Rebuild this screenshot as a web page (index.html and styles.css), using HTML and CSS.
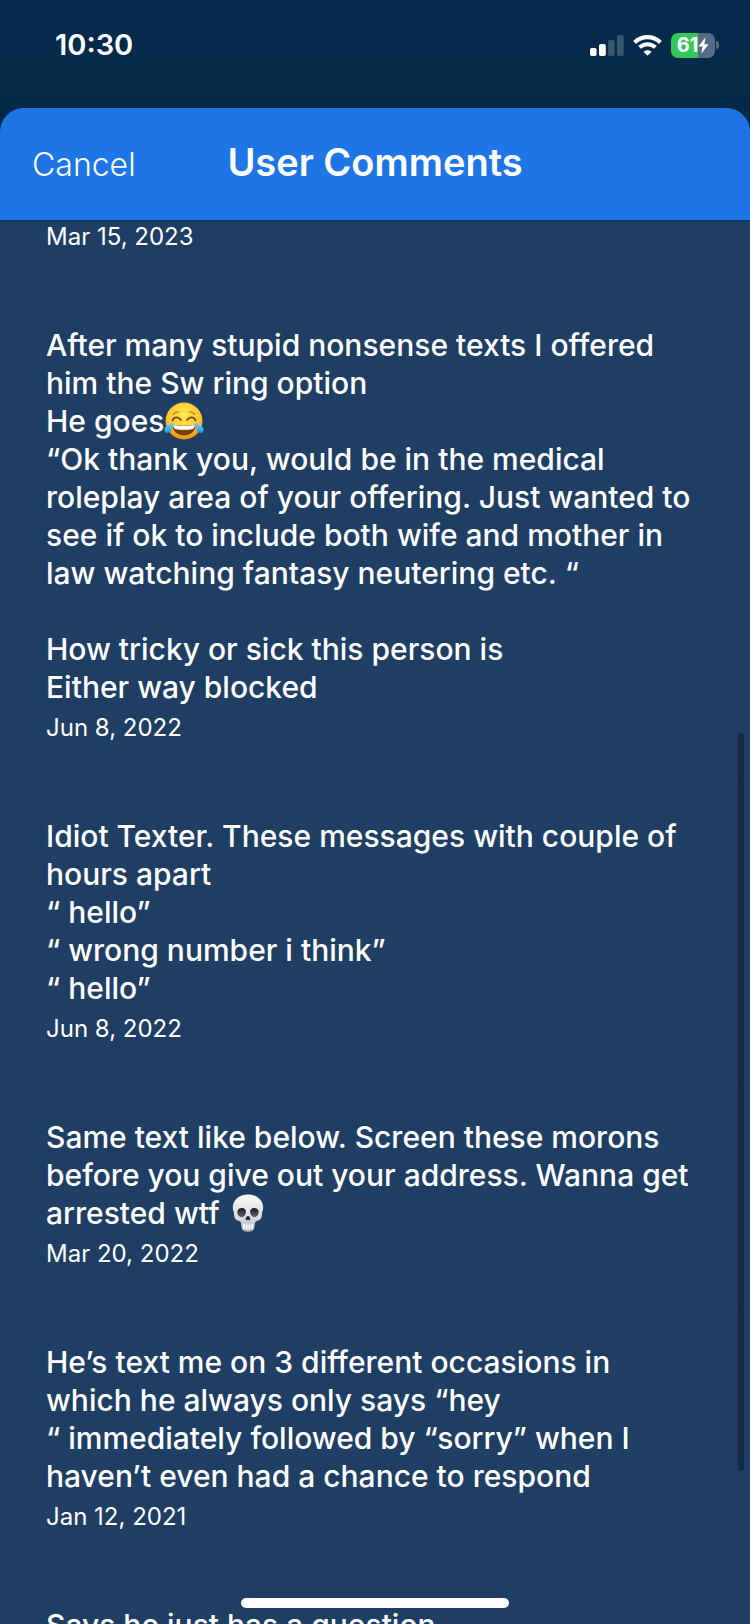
FILE: index.html
```html
<!doctype html>
<html lang="en">
    <head>
        <meta charset="UTF-8" />
        <meta name="viewport" content="width=device-width, initial-scale=1.0" />
        <title>User Comments</title>
        <link rel="stylesheet" href="styles.css">
    </head>
    <body>
        <div class="status-bar">
            <time class="clock">10:30</time>
            <div class="status-icons">
                <svg class="signal" width="34" height="21" viewBox="0 0 34 21" fill="#fff" aria-hidden="true">
                    <rect x="0" y="13" width="6.6" height="8" rx="1.8" />
                    <rect x="9" y="9" width="6.8" height="12" rx="1.8" />
                    <rect x="18" y="5" width="6.6" height="16" rx="1.8" opacity="0.2" />
                    <rect x="27" y="0" width="6.8" height="21" rx="1.8" opacity="0.2" />
                </svg>
                <svg class="wifi" width="29" height="21" viewBox="0 0 29 21" fill="none" stroke="#fff" aria-hidden="true">
                    <path d="M1.6 7.4C8.8 0.4 20.2 0.4 27.4 7.4" stroke-width="4.2" />
                    <path d="M6.6 12.4C11.1 8.1 17.9 8.1 22.4 12.4" stroke-width="4" />
                    <path d="M14.5 20.8L10.4 16.7C12.6 14.6 16.4 14.6 18.6 16.7Z" fill="#fff" stroke="none" />
                </svg>
                <div class="battery">
                    <div class="battery-body">
                        <span>61</span>
                        <svg width="11" height="17" viewBox="0 0 11 17" fill="#fff" aria-hidden="true">
                            <path d="M7.6 0.3L0.3 9.4H4.6L3.2 16.7L10.7 7.3H6.3Z" />
                        </svg>
                    </div>
                    <div class="battery-tip"></div>
                </div>
            </div>
        </div>

        <main class="sheet">
            <header class="sheet-header">
                <button type="button" class="cancel">Cancel</button>
                <h1>User Comments</h1>
            </header>

            <div class="comments">
                <article class="comment">
                    <time>Mar 15, 2023</time>
                </article>

                <article class="comment">
                    <p>
                        After many stupid nonsense texts I offered him the Sw
                        ring option<br />
                        He goes<svg class="emoji" viewBox="0 0 40 38" role="img" aria-label="face with tears of joy">
                            <defs>
                                <radialGradient id="face" cx="0.5" cy="0.35" r="0.68">
                                    <stop offset="0" stop-color="#ffe94f" />
                                    <stop offset="0.65" stop-color="#fdc62f" />
                                    <stop offset="1" stop-color="#e8850f" />
                                </radialGradient>
                                <linearGradient id="tear" x1="0" y1="0" x2="0" y2="1">
                                    <stop offset="0" stop-color="#8bdcff" />
                                    <stop offset="1" stop-color="#1995e8" />
                                </linearGradient>
                            </defs>
                            <circle cx="20" cy="19" r="18.5" fill="url(#face)" />
                            <path d="M8.5 22.5C16 24.3 24 24.3 31.5 22.5C31.5 29.5 26.5 33.5 20 33.5S8.5 29.5 8.5 22.5Z" fill="#7b3f0c" />
                            <path d="M9.2 22.8C16 24.4 24 24.4 30.8 22.8C30.6 26 29.6 27 28 27.2C23 28 17 28 12 27.2C10.4 27 9.4 26 9.2 22.8Z" fill="#fff" />
                            <path d="M8.5 18.2C10.5 14.4 14.3 14.6 17 18M23 18C25.7 14.6 29.5 14.4 31.5 18.2" fill="none" stroke="#7a450e" stroke-width="1.9" stroke-linecap="round" />
                            <path d="M9.5 12C11 10.6 12.5 9.9 14.8 9.8M30.5 12C29 10.6 27.5 9.9 25.2 9.8" fill="none" stroke="#b8741a" stroke-width="1.3" stroke-linecap="round" />
                            <path d="M8.6 19.2C9.3 25 7.4 31 3.4 31C0.4 31 -0.6 27.6 1.4 25.2C3.2 23.2 6.6 22 8.6 19.2Z" fill="url(#tear)" />
                            <path d="M31.4 19.2C30.7 25 32.6 31 36.6 31C39.6 31 40.6 27.6 38.6 25.2C36.8 23.2 33.4 22 31.4 19.2Z" fill="url(#tear)" />
                        </svg><br />
                        “Ok thank you, would be in the medical roleplay area of
                        your offering. Just wanted to see if ok to include both
                        wife and mother in law watching fantasy neutering etc.
                        “<br />
                        <br />
                        How tricky or sick this person is<br />
                        Either way blocked
                    </p>
                    <time>Jun 8, 2022</time>
                </article>

                <article class="comment">
                    <p>
                        Idiot Texter. These messages with couple of hours
                        apart<br />
                        “ hello”<br />
                        “ wrong number i think”<br />
                        “ hello”
                    </p>
                    <time>Jun 8, 2022</time>
                </article>

                <article class="comment">
                    <p>
                        Same text like below. Screen these morons before you
                        give out your address. Wanna get arrested wtf
                        <svg class="emoji" viewBox="0 0 40 40" role="img" aria-label="skull">
                            <defs>
                                <linearGradient id="bone" x1="0" y1="0" x2="0" y2="1">
                                    <stop offset="0" stop-color="#fbfbfc" />
                                    <stop offset="0.6" stop-color="#dcdde2" />
                                    <stop offset="1" stop-color="#b4b5ba" />
                                </linearGradient>
                                <linearGradient id="socket" x1="0" y1="0" x2="0" y2="1">
                                    <stop offset="0" stop-color="#17171b" />
                                    <stop offset="1" stop-color="#65656b" />
                                </linearGradient>
                            </defs>
                            <path d="M20 0.5C29.5 0.5 36 6.2 36 14.5C36 17.4 34.7 18.8 34.7 21.3C34.7 25 33.6 27.2 30.2 28.2C27.4 29 27.3 30 27 33.5C26.7 38 25 39.7 20 39.7S13.3 38 13 33.5C12.7 30 12.6 29 9.8 28.2C6.4 27.2 5.3 25 5.3 21.3C5.3 18.8 4 17.4 4 14.5C4 6.2 10.5 0.5 20 0.5Z" fill="url(#bone)" />
                            <path d="M9.3 17.2C10.8 14.4 15.5 14 17.3 16.6C18.7 19 17.2 23.6 14 24.3C10.4 25 7.6 21 9.3 17.2Z" fill="url(#socket)" />
                            <path d="M30.7 17.2C29.2 14.4 24.5 14 22.7 16.6C21.3 19 22.8 23.6 26 24.3C29.6 25 32.4 21 30.7 17.2Z" fill="url(#socket)" />
                            <path d="M20 23.2C21.6 23.2 22.8 26 22.2 27.2C21.6 28 20.7 27 20 27S18.4 28 17.8 27.2C17.2 26 18.4 23.2 20 23.2Z" fill="#29292e" />
                            <path d="M14.5 31.5C18 32.6 22 32.6 25.5 31.5L25 36.6C22 37.6 18 37.6 15 36.6Z" fill="#fff" />
                            <path d="M17.3 32V37.2M20 32.3V37.4M22.7 32V37.2" stroke="#a9aaaf" stroke-width="0.7" />
                        </svg>
                    </p>
                    <time>Mar 20, 2022</time>
                </article>

                <article class="comment">
                    <p>
                        He’s text me on 3 different occasions in which he always
                        only says “hey<br />
                        “ immediately followed by “sorry” when I haven’t even
                        had a chance to respond
                    </p>
                    <time>Jan 12, 2021</time>
                </article>

                <article class="comment">
                    <p>Says he just has a question</p>
                </article>
            </div>
        </main>

        <div class="scroll-thumb"></div>
        <div class="home-indicator"></div>
    </body>
</html>
```

FILE: styles.css
```css
* {
    margin: 0;
    padding: 0;
    box-sizing: border-box;
}

body {
    font-family: Inter, "Liberation Sans", sans-serif;
    color: #fff;
    background: linear-gradient(#072a50 0, #062a45 108px);
    height: 100vh;
    display: flex;
    flex-direction: column;
    overflow: hidden;
}

/* Status bar */
.status-bar {
    height: 108px;
    padding: 26px 31px 0 55px;
    display: flex;
    justify-content: space-between;
    align-items: flex-start;
}

.clock {
    font-size: 29px;
    line-height: 38px;
    font-weight: 600;
}

.status-icons {
    height: 38px;
    display: flex;
    align-items: center;
    gap: 9px;
}

.battery {
    display: flex;
    align-items: center;
    gap: 1px;
}

.battery-body {
    width: 44px;
    height: 25px;
    border-radius: 7px;
    background: linear-gradient(90deg, #34c759 61%, #566c84 61%);
    display: flex;
    align-items: center;
    justify-content: center;
    font-size: 20px;
    line-height: 25px;
    font-weight: 700;
}

.battery-tip {
    width: 3px;
    height: 8px;
    border-radius: 0 3px 3px 0;
    background: #566c84;
}

/* Sheet */
.sheet {
    flex: 1;
    min-height: 0;
    display: flex;
    flex-direction: column;
    background: #1f3e63;
    border-radius: 24px 24px 0 0;
    overflow: hidden;
}

.sheet-header {
    flex-shrink: 0;
    display: grid;
    grid-template-columns: 1fr auto 1fr;
    align-items: baseline;
    padding: 30px 32px 31px;
    background: #1d75e6;
    border-bottom: 1px solid #1a3152;
}

.sheet-header h1 {
    font-size: 38px;
    line-height: 48px;
    font-weight: 600;
}

.cancel {
    justify-self: start;
    font-family: inherit;
    font-size: 32px;
    line-height: 48px;
    font-weight: 350;
    color: #fff;
    background: none;
    border: none;
    cursor: pointer;
}

/* Comments */
.comments {
    padding-left: 46px;
}

.comment {
    padding: 36px 46px 36px 0;
    border-bottom: 1px solid #293d5a;
}

.comment:first-child {
    padding-top: 0;
}

.comment p {
    font-size: 30px;
    line-height: 38px;
    font-weight: 550;
    margin-bottom: 6px;
}

.comment time {
    display: block;
    font-size: 24px;
    line-height: 32px;
    font-weight: 400;
}

.emoji {
    width: 40px;
    height: 38px;
    vertical-align: top;
}

/* Overlays */
.scroll-thumb {
    position: fixed;
    top: 733px;
    right: 6px;
    width: 6px;
    height: 738px;
    border-radius: 3px;
    background: #162a43;
}

.home-indicator {
    position: fixed;
    bottom: 16px;
    left: 50%;
    width: 268px;
    height: 10px;
    margin-left: -134px;
    border-radius: 5px;
    background: #fff;
}
```
